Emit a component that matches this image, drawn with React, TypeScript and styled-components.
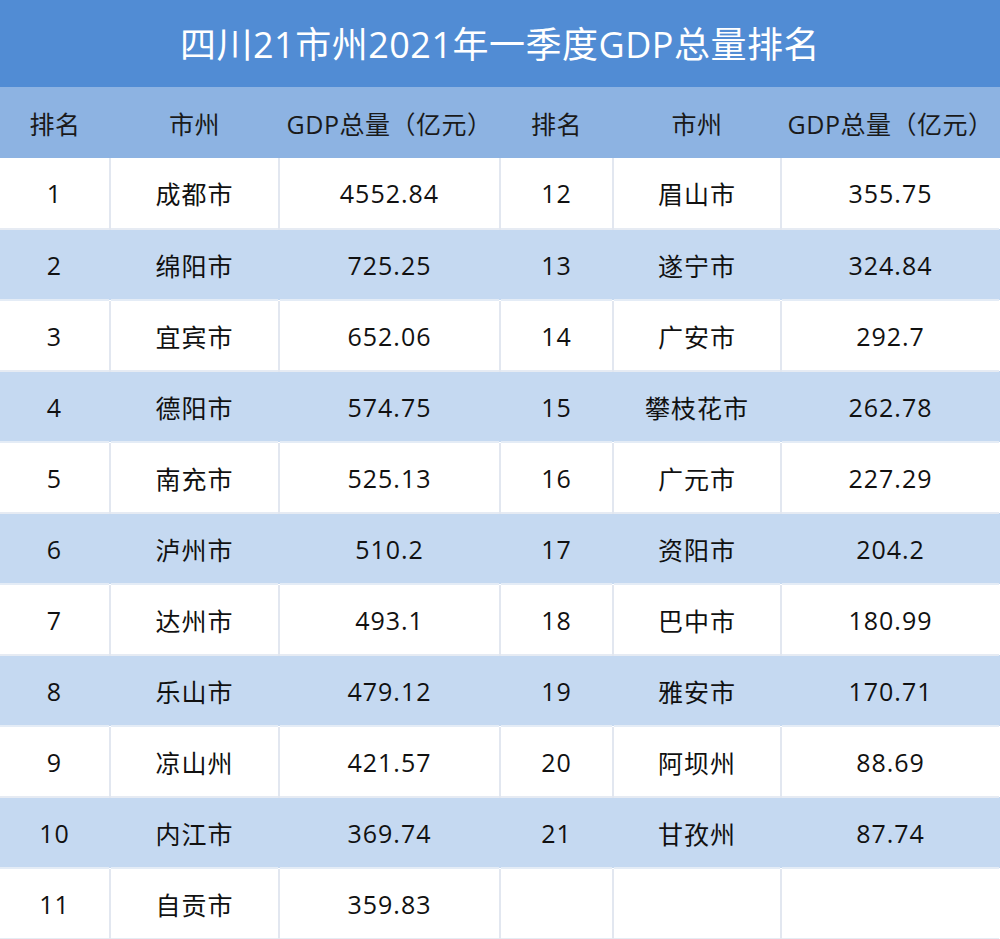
import styled, { createGlobalStyle } from "styled-components";

const GlobalStyle = createGlobalStyle`
  body {
    margin: 0;
    background: #ffffff;
    font-family: "Open Sans", "Noto Sans CJK SC", sans-serif;
  }
`;

const Wrapper = styled.div`
  width: 1000px;
  height: 939px;
  overflow: hidden;
`;

const Title = styled.div`
  height: 87px;
  background-color: #518cd4;
  color: #ffffff;
  font-size: 36px;
  display: flex;
  align-items: center;
  justify-content: center;
  letter-spacing: 0.5px;
  padding-bottom: 2px;
  box-sizing: border-box;
`;

const Table = styled.table`
  width: 1000px;
  border-collapse: collapse;
  table-layout: fixed;
`;

const HeadCell = styled.th`
  height: 71px;
  padding: 0;
  background-color: #8db3e2;
  color: #1a1a1a;
  font-size: 25px;
  font-weight: 400;
  text-align: center;
  letter-spacing: 0.5px;
`;

const Row = styled.tr<{ $shade: boolean }>`
  height: 71px;
  background-color: ${(props) => (props.$shade ? "#c5d9f1" : "#ffffff")};
  border-bottom: 2px solid ${(props) => (props.$shade ? "#e4ecf6" : "#e6ebf3")};
`;

const Cell = styled.td<{ $shade: boolean; $last?: boolean }>`
  padding: 0;
  text-align: center;
  font-size: 25px;
  letter-spacing: 1px;
  color: #111;
  border-right: 2px solid
    ${(props) => (props.$shade || props.$last ? "transparent" : "#e2e7f0")};
`;

const widths = [110, 169, 221, 113, 168, 219];
const headers = ["排名", "市州", "GDP总量（亿元）", "排名", "市州", "GDP总量（亿元）"];

const left: [string, string][] = [
  ["成都市", "4552.84"],
  ["绵阳市", "725.25"],
  ["宜宾市", "652.06"],
  ["德阳市", "574.75"],
  ["南充市", "525.13"],
  ["泸州市", "510.2"],
  ["达州市", "493.1"],
  ["乐山市", "479.12"],
  ["凉山州", "421.57"],
  ["内江市", "369.74"],
  ["自贡市", "359.83"],
];

const right: [string, string][] = [
  ["眉山市", "355.75"],
  ["遂宁市", "324.84"],
  ["广安市", "292.7"],
  ["攀枝花市", "262.78"],
  ["广元市", "227.29"],
  ["资阳市", "204.2"],
  ["巴中市", "180.99"],
  ["雅安市", "170.71"],
  ["阿坝州", "88.69"],
  ["甘孜州", "87.74"],
];

function App() {
  return (
    <Wrapper>
      <GlobalStyle />
      <Title>四川21市州2021年一季度GDP总量排名</Title>
      <Table>
        <colgroup>
          {widths.map((w, i) => (
            <col key={i} style={{ width: w }} />
          ))}
        </colgroup>
        <thead>
          <tr>
            {headers.map((h, i) => (
              <HeadCell key={i}>{h}</HeadCell>
            ))}
          </tr>
        </thead>
        <tbody>
          {left.map((l, i) => {
            const shade = i % 2 === 1;
            const r = right[i];
            return (
              <Row key={i} $shade={shade}>
                <Cell $shade={shade}>{i + 1}</Cell>
                <Cell $shade={shade}>{l[0]}</Cell>
                <Cell $shade={shade}>{l[1]}</Cell>
                <Cell $shade={shade}>{r ? i + 12 : ""}</Cell>
                <Cell $shade={shade}>{r ? r[0] : ""}</Cell>
                <Cell $shade={shade} $last>
                  {r ? r[1] : ""}
                </Cell>
              </Row>
            );
          })}
        </tbody>
      </Table>
    </Wrapper>
  );
}

export default App;
